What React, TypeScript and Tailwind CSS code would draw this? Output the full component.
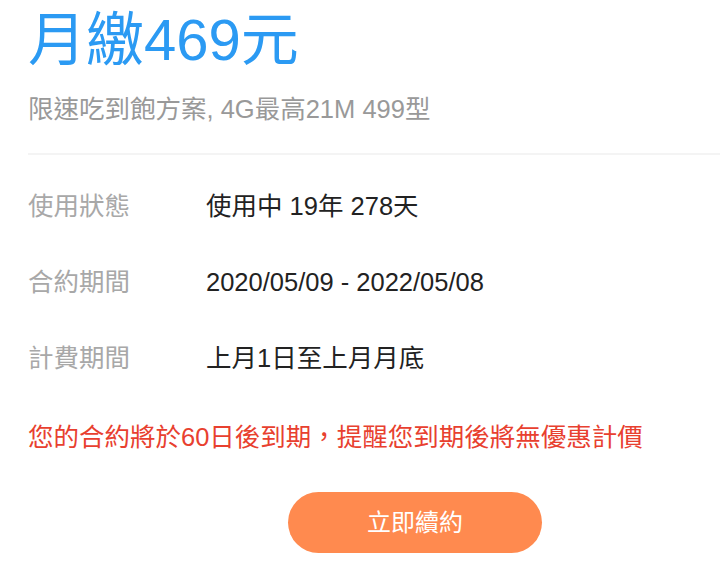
import React from 'react';

const rows = [
  { label: '使用狀態', value: '使用中 19年 278天' },
  { label: '合約期間', value: '2020/05/09 - 2022/05/08' },
  { label: '計費期間', value: '上月1日至上月月底' },
];

const App: React.FC = () => {
  return (
    <div
      className="w-[720px] h-[564px] overflow-hidden bg-white pl-[28px]"
      style={{ fontFamily: '"Liberation Sans", "Noto Sans CJK TC", sans-serif' }}
    >
      <h1 className="pt-[8px] text-[58px] leading-[64px] text-[#2b9af3] font-normal">月繳469元</h1>
      <p className="mt-[22px] text-[25.5px] leading-[30px] text-[#999999]">限速吃到飽方案, 4G最高21M 499型</p>
      <div className="mt-[29px] h-[2px] bg-[#f4f4f4]" />

      <div className="mt-[36px] flex flex-col gap-[46px]">
        {rows.map((row) => (
          <div key={row.label} className="flex items-center text-[25.5px] leading-[30px]">
            <span className="w-[178px] text-[#a8a8a8]">{row.label}</span>
            <span className="text-[#222222]">{row.value}</span>
          </div>
        ))}
      </div>

      <p className="mt-[49px] text-[25.5px] leading-[30px] text-[#e8402f]">
        您的合約將於60日後到期，提醒您到期後將無優惠計價
      </p>

      <button className="ml-[260px] mt-[40px] flex h-[61px] w-[254px] items-center justify-center rounded-full bg-[#ff8a4f] text-[24px] text-white">
        立即續約
      </button>
    </div>
  );
};

export default App;
